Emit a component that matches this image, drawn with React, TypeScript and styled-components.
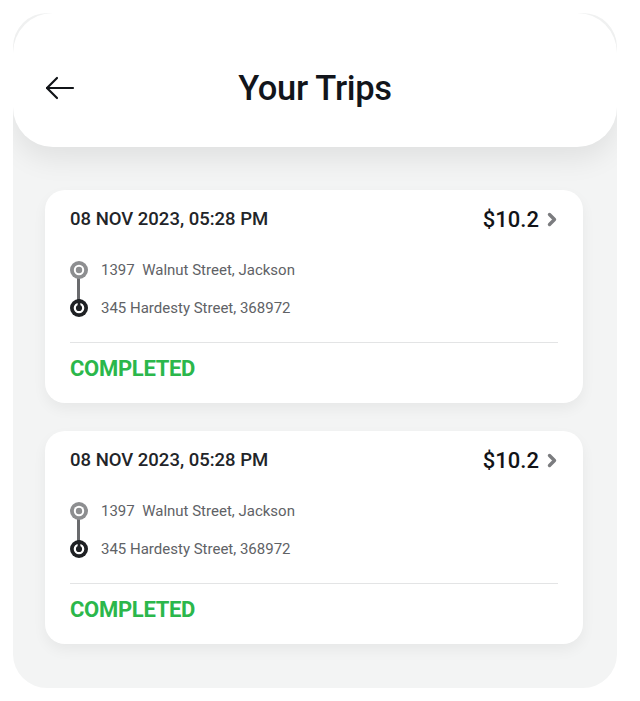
import React from "react";
import styled, { createGlobalStyle } from "styled-components";

const Global = createGlobalStyle`
  html, body { margin: 0; padding: 0; background: #ffffff; }
  body { font-family: Roboto, "Noto Sans", Arial, sans-serif; }
  * { box-sizing: border-box; }
`;

const Frame = styled.div`
  margin: 13px;
  width: 604px;
  height: 675px;
  border-radius: 34px;
  background: #f3f4f4;
  display: flex;
  flex-direction: column;
  overflow: hidden;
`;

const Header = styled.header`
  height: 134px;
  flex: none;
  background: #ffffff;
  border-radius: 40px;
  box-shadow: 0 12px 28px rgba(0, 0, 0, 0.08);
  display: grid;
  grid-template-columns: 1fr auto 1fr;
  align-items: center;
  padding: 16px 32px 0 32px;
  position: relative;
  z-index: 1;
`;

const BackButton = styled.button`
  border: 0;
  background: none;
  padding: 0;
  width: 30px;
  height: 30px;
  display: flex;
  align-items: center;
  color: #111418;
  cursor: pointer;
`;

const Title = styled.h1`
  margin: 0;
  font-family: Roboto, Arial, sans-serif;
  font-weight: 500;
  font-size: 34.5px;
  line-height: 40px;
  color: #12151b;
  letter-spacing: -0.3px;
  transform: scaleY(1.04);
`;

const List = styled.main`
  display: flex;
  flex-direction: column;
  gap: 28px;
  padding: 43px 34px 0 32px;
`;

const Card = styled.article`
  height: 213px;
  background: #ffffff;
  border-radius: 20px;
  box-shadow: 0 6px 14px rgba(0, 0, 0, 0.05);
  padding: 18px 25px 0 25px;
  display: flex;
  flex-direction: column;
`;

const TopRow = styled.div`
  height: 22px;
  display: flex;
  align-items: center;
  justify-content: space-between;
`;

const DateText = styled.span`
  font-size: 18.5px;
  font-weight: 500;
  color: #222428;
`;

const PriceBox = styled.div`
  display: flex;
  align-items: center;
  gap: 8px;
`;

const Price = styled.span`
  font-size: 22px;
  font-weight: 500;
  color: #121418;
`;

const Route = styled.div`
  margin-top: 30px;
  display: flex;
  flex-direction: column;
  gap: 18px;
  position: relative;
`;

const Stop = styled.div`
  height: 20px;
  display: flex;
  align-items: center;
  gap: 13px;
`;

const Address = styled.span`
  font-size: 15px;
  color: #606266;
  white-space: pre;
`;

const Connector = styled.span`
  position: absolute;
  left: 7px;
  top: 14px;
  width: 3px;
  height: 26px;
  background: #6a6b6e;
`;

const Divider = styled.hr`
  margin: 24px 0 0 0;
  border: 0;
  height: 1px;
  background: #e3e4e5;
`;

const Status = styled.div`
  margin-top: 14px;
  line-height: 24px;
  font-size: 22px;
  font-weight: 700;
  color: #2bb74b;
  letter-spacing: -0.3px;
`;

const ArrowLeft = () => (
  <svg width="30" height="30" viewBox="0 0 30 30" fill="none" stroke="currentColor" strokeWidth="2.2" strokeLinecap="round" strokeLinejoin="round">
    <path d="M28 15H2" />
    <path d="M12 5L2 15l10 10" />
  </svg>
);

const Chevron = () => (
  <svg width="11" height="15" viewBox="0 0 11 15" fill="none" stroke="#7b7c7f" strokeWidth="3.4" strokeLinecap="round" strokeLinejoin="round">
    <path d="M2.5 2.5L7.5 7.5l-5 5" />
  </svg>
);

const OriginDot = () => (
  <svg width="18" height="18" viewBox="0 0 18 18" style={{ position: "relative", zIndex: 1 }}>
    <circle cx="9" cy="9" r="9" fill="#8d8e90" />
    <circle cx="9" cy="9" r="5.2" fill="#ffffff" />
    <circle cx="9" cy="9" r="3.2" fill="#8d8e90" />
  </svg>
);

const DestDot = () => (
  <svg width="18" height="18" viewBox="0 0 18 18" style={{ position: "relative", zIndex: 1 }}>
    <circle cx="9" cy="9" r="9" fill="#1f2124" />
    <circle cx="9" cy="9" r="4.2" fill="none" stroke="#ffffff" strokeWidth="2.2" />
    <rect x="7.6" y="0" width="2.8" height="9.5" fill="#1f2124" />
  </svg>
);

const trips = [
  { date: "08 NOV 2023, 05:28 PM", price: "$10.2", from: "1397  Walnut Street, Jackson", to: "345 Hardesty Street, 368972", status: "COMPLETED" },
  { date: "08 NOV 2023, 05:28 PM", price: "$10.2", from: "1397  Walnut Street, Jackson", to: "345 Hardesty Street, 368972", status: "COMPLETED" },
];

export default function App() {
  return (
    <>
      <Global />
      <Frame>
        <Header>
          <BackButton aria-label="Back">
            <ArrowLeft />
          </BackButton>
          <Title>Your Trips</Title>
          <span />
        </Header>
        <List>
          {trips.map((t, i) => (
            <Card key={i}>
              <TopRow>
                <DateText>{t.date}</DateText>
                <PriceBox>
                  <Price>{t.price}</Price>
                  <Chevron />
                </PriceBox>
              </TopRow>
              <Route>
                <Connector />
                <Stop>
                  <OriginDot />
                  <Address>{t.from}</Address>
                </Stop>
                <Stop>
                  <DestDot />
                  <Address>{t.to}</Address>
                </Stop>
              </Route>
              <Divider />
              <Status>{t.status}</Status>
            </Card>
          ))}
        </List>
      </Frame>
    </>
  );
}
